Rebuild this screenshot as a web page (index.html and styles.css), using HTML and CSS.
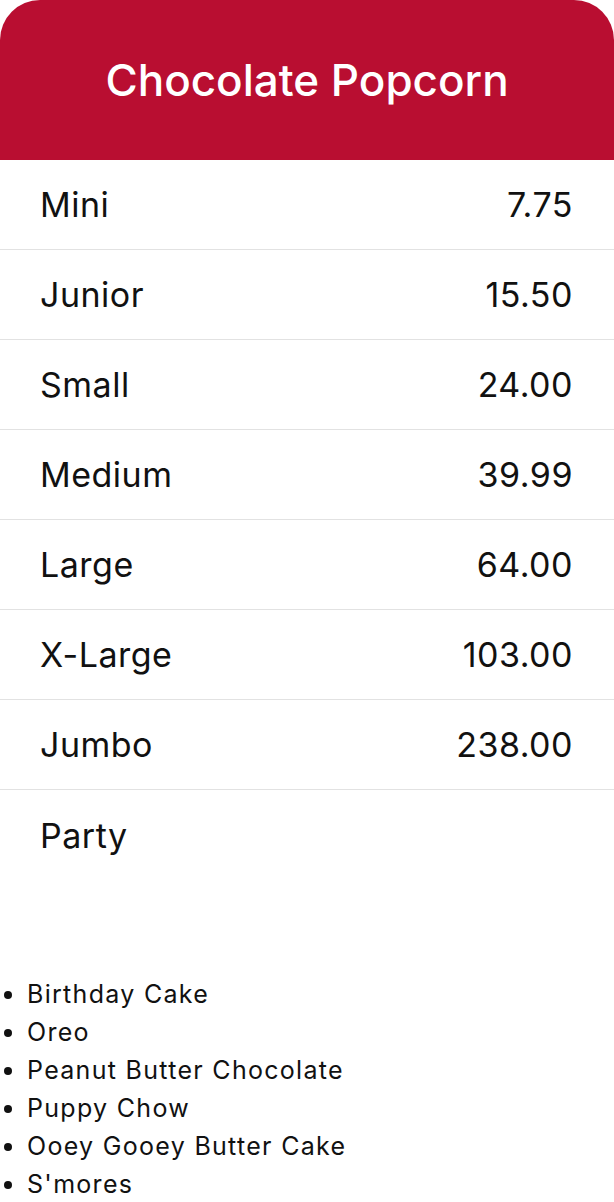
FILE: index.html
```html
<!DOCTYPE html>
<html lang="en">
<head>
    <meta charset="UTF-8">
    <meta name="viewport" content="width=device-width, initial-scale=1.0">
    <title>Chocolate Popcorn</title>
    <link rel="stylesheet" href="styles.css">
</head>
<body>
    <section class="menu-card">
        <header class="menu-head">
            <h1>Chocolate Popcorn</h1>
        </header>

        <div class="size-row"><span>Mini</span><span>7.75</span></div>
        <div class="size-row"><span>Junior</span><span>15.50</span></div>
        <div class="size-row"><span>Small</span><span>24.00</span></div>
        <div class="size-row"><span>Medium</span><span>39.99</span></div>
        <div class="size-row"><span>Large</span><span>64.00</span></div>
        <div class="size-row"><span>X-Large</span><span>103.00</span></div>
        <div class="size-row"><span>Jumbo</span><span>238.00</span></div>
        <div class="size-row last"><span>Party</span><span></span></div>
    </section>

    <ul class="flavors">
        <li>Birthday Cake</li>
        <li>Oreo</li>
        <li>Peanut Butter Chocolate</li>
        <li>Puppy Chow</li>
        <li>Ooey Gooey Butter Cake</li>
        <li>S'mores</li>
    </ul>
</body>
</html>
```

FILE: styles.css
```css
body {
    margin: 0;
    font-family: 'Inter', 'Noto Sans', sans-serif;
    background-color: #fff;
    color: #111;
}

.menu-head {
    background-color: #b90e31;
    border-radius: 40px 40px 0 0;
    height: 160px;
    display: flex;
    align-items: center;
    justify-content: center;
}

.menu-head h1 {
    margin: 0;
    color: #fff;
    font-size: 44px;
    font-weight: 500;
}

.size-row {
    display: flex;
    justify-content: space-between;
    align-items: center;
    height: 89px;
    padding: 0 41px 0 40px;
    border-bottom: 1px solid #e2e2e2;
    font-size: 34px;
    letter-spacing: 0.5px;
}

.size-row.last {
    border-bottom: none;
    height: 90px;
}

.flavors {
    margin: 95px 0 0;
    padding-left: 27px;
    font-size: 25px;
    line-height: 38px;
    letter-spacing: 1.3px;
}
```
